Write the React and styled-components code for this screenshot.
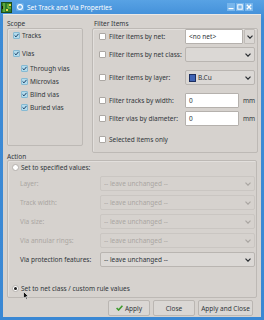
import React from "react";
import styled, { createGlobalStyle } from "styled-components";

const GlobalStyle = createGlobalStyle`
  html, body { margin: 0; padding: 0; }
  body {
    width: 264px;
    height: 320px;
    overflow: hidden;
    background: #3a8ad6;
    font-family: "Noto Sans", "DejaVu Sans", sans-serif;
    font-size: 6.5px;
    color: #31363b;
  }
`;

const Window = styled.div`
  position: relative;
  width: 264px;
  height: 320px;
  display: flex;
  flex-direction: column;
  background: linear-gradient(#58a2e4, #3d8bd6 20px, #3a88d4);
`;

const TitleBar = styled.div`
  height: 14px;
  flex: none;
  display: flex;
  align-items: center;
  padding: 0 11px 0 1px;
`;

const AppIcon = styled.svg`
  width: 11px;
  height: 11px;
  flex: none;
`;

const ViaIcon = styled.svg`
  width: 8px;
  height: 8px;
  margin-left: 4px;
  flex: none;
`;

const Title = styled.div`
  margin-left: 3px;
  color: #ffffff;
  font-size: 6.5px;
  flex: 1;
  white-space: nowrap;
`;

const WinButtons = styled.div`
  display: flex;
  gap: 1px;
`;

const WinButton = styled.div`
  width: 8px;
  height: 8px;
  background: #78b6ec;
  display: flex;
  align-items: center;
  justify-content: center;
`;

const Client = styled.div`
  flex: 1;
  margin: 0 3px 3px 3px;
  background: #d6d2ce;
  display: flex;
  flex-direction: column;
  padding: 6px 4px 1px 4px;
  box-shadow: inset 0 1px 0 #ebe8e5;
`;

const TopRow = styled.div`
  display: flex;
  gap: 9px;
  align-items: flex-start;
`;

const Column = styled.div`
  display: flex;
  flex-direction: column;
  width: ${(p) => (p.$width ? `${p.$width}px` : "auto")};
  flex: ${(p) => (p.$width ? "none" : "1")};
`;

const GroupLabel = styled.div`
  height: ${(p) => p.$h || 8}px;
  line-height: ${(p) => p.$h || 8}px;
  padding-left: ${(p) => p.$pl || 0}px;
  white-space: nowrap;
`;

const GroupBox = styled.div`
  box-sizing: border-box;
  height: ${(p) => p.$h}px;
  border: 1px solid #bdb9b5;
  border-radius: 2px;
  box-shadow: inset 1px 1px 0 #e2dfdc;
  padding: ${(p) => p.$pad};
  display: flex;
  flex-direction: column;
`;

const CheckRow = styled.div`
  height: 9px;
  display: flex;
  align-items: center;
  gap: 2px;
  margin-top: ${(p) => p.$mt || 0}px;
  padding-left: ${(p) => p.$indent || 0}px;
  white-space: nowrap;
`;

const Box = styled.span`
  width: 7px;
  height: 7px;
  flex: none;
  box-sizing: border-box;
  border: 1px solid ${(p) => (p.$checked ? "#86bad3" : "#aca8a4")};
  background: ${(p) => (p.$checked ? "#b3dbec" : "#ffffff")};
  border-radius: 1px;
  display: flex;
  align-items: center;
  justify-content: center;
`;

const Radio = styled.span`
  width: 7px;
  height: 7px;
  flex: none;
  box-sizing: border-box;
  border-radius: 50%;
  border: 1px solid #b3afab;
  background: #ffffff;
  display: flex;
  align-items: center;
  justify-content: center;
  &::after {
    content: "";
    width: 3px;
    height: 3px;
    border-radius: 50%;
    background: ${(p) => (p.$checked ? "#1e1e1e" : "transparent")};
  }
`;

const FilterRow = styled.div`
  height: 15px;
  display: grid;
  grid-template-columns: 86px 1fr;
  align-items: center;
  margin-top: ${(p) => p.$mt || 0}px;
`;

const FilterLabel = styled.div`
  display: flex;
  align-items: center;
  gap: 3px;
  white-space: nowrap;
`;

const Combo = styled.div`
  height: 15px;
  box-sizing: border-box;
  border: 1px solid ${(p) => (p.$disabled ? "#cac6c2" : "#b9b5b1")};
  border-radius: 2px;
  background: ${(p) => (p.$disabled ? "#d6d2ce" : "#dbd8d5")};
  color: ${(p) => (p.$disabled ? "#aaa6a2" : "#31363b")};
  display: flex;
  align-items: center;
  padding: 0 3px 0 3px;
  gap: 2px;
  white-space: nowrap;
`;

const ComboText = styled.span`
  flex: 1;
  overflow: hidden;
`;

const Chevron = styled.svg`
  width: 6px;
  height: 4px;
  flex: none;
`;

const EntryCombo = styled.div`
  display: flex;
  height: 15px;
  gap: 1px;
`;

const Entry = styled.div`
  box-sizing: border-box;
  width: ${(p) => p.$w}px;
  height: 15px;
  background: #ffffff;
  border: 1px solid #b5b1ad;
  border-radius: 1px;
  display: flex;
  align-items: center;
  padding-left: 3px;
  white-space: nowrap;
`;

const DropButton = styled.div`
  flex: 1;
  max-width: 11px;
  box-sizing: border-box;
  border: 1px solid #c0bcb8;
  border-radius: 1px;
  background: #dbd8d5;
  display: flex;
  align-items: center;
  justify-content: center;
`;

const UnitRow = styled.div`
  display: flex;
  align-items: center;
  gap: 4px;
`;

const Swatch = styled.span`
  width: 5px;
  height: 6px;
  background: #3f63b4;
  border: 1px solid #1d2f60;
  flex: none;
`;

const ActionLabel = styled(GroupLabel)`
  margin-top: 0;
`;

const ActionGrid = styled.div`
  display: grid;
  grid-template-columns: 88px 1fr;
  row-gap: 4px;
  margin-top: 4px;
  align-items: center;
`;

const ActionLabelText = styled.div`
  padding-left: 8px;
  color: ${(p) => (p.$disabled ? "#aaa6a2" : "#31363b")};
  white-space: nowrap;
`;

const ButtonRow = styled.div`
  display: flex;
  justify-content: flex-end;
  gap: 3px;
  margin-top: 2px;
  padding-right: 4px;
`;

const Button = styled.div`
  box-sizing: border-box;
  width: ${(p) => p.$w}px;
  height: 16px;
  border: 1px solid #bab6b2;
  border-radius: 2px;
  background: #dad7d4;
  display: flex;
  align-items: center;
  justify-content: center;
  gap: 2px;
  white-space: nowrap;
`;

const Cursor = styled.svg`
  position: absolute;
  left: 23px;
  top: 291px;
  width: 6px;
  height: 9px;
`;

const CheckMark = () => (
  <svg width="7" height="7" viewBox="0 0 7 7">
    <path d="M0.8 3.4 L2.8 5.4 L6.3 1.2" fill="none" stroke="#1b3c62" strokeWidth="1.4" />
  </svg>
);

const Check = ({ checked }) => <Box $checked={checked}>{checked && <CheckMark />}</Box>;

const ChevronIcon = ({ color }) => (
  <Chevron viewBox="0 0 6 4">
    <path d="M0.5 0.6 L3 3.2 L5.5 0.6" fill="none" stroke={color} strokeWidth="1.2" />
  </Chevron>
);

const scopeItems = [
  { label: "Tracks", mt: 0, indent: 0 },
  { label: "Vias", mt: 9, indent: 0 },
  { label: "Through vias", mt: 6, indent: 8 },
  { label: "Microvias", mt: 4, indent: 8 },
  { label: "Blind vias", mt: 4, indent: 8 },
  { label: "Buried vias", mt: 4, indent: 8 },
];

const actionRows = [
  { label: "Layer:", disabled: true },
  { label: "Track width:", disabled: true },
  { label: "Via size:", disabled: true },
  { label: "Via annular rings:", disabled: true },
  { label: "Via protection features:", disabled: false },
];

export default function App() {
  return (
    <>
      <GlobalStyle />
      <Window>
        <TitleBar>
          <AppIcon viewBox="0 0 11 11">
            <rect x="0" y="0" width="11" height="11" fill="#2f7d2a" />
            <rect x="0.5" y="0.5" width="10" height="10" fill="none" stroke="#1c4e18" />
            <path d="M3 1 V10 M7 2 V6 H10" stroke="#8fcf4f" strokeWidth="1" fill="none" />
            <rect x="5" y="7" width="2" height="2" fill="#e8d84a" />
            <rect x="8" y="2" width="2" height="2" fill="#e8d84a" />
            <rect x="1" y="4" width="1" height="3" fill="#151515" />
          </AppIcon>
          <ViaIcon viewBox="0 0 8 8">
            <rect x="0" y="0" width="8" height="8" rx="1.5" fill="#6aaee9" />
            <circle cx="4" cy="4" r="2.4" fill="none" stroke="#ffffff" strokeWidth="1.1" />
          </ViaIcon>
          <Title>Set Track and Via Properties</Title>
          <WinButtons>
            <WinButton>
              <svg width="6" height="6" viewBox="0 0 6 6">
                <rect x="0.5" y="4" width="5" height="1.2" fill="#ffffff" />
              </svg>
            </WinButton>
            <WinButton>
              <svg width="6" height="6" viewBox="0 0 6 6">
                <rect x="0.8" y="0.8" width="4.4" height="4.4" fill="none" stroke="#ffffff" strokeWidth="1" />
              </svg>
            </WinButton>
            <WinButton>
              <svg width="6" height="6" viewBox="0 0 6 6">
                <path d="M0.8 0.8 L5.2 5.2 M5.2 0.8 L0.8 5.2" stroke="#ffffff" strokeWidth="1.3" />
              </svg>
            </WinButton>
          </WinButtons>
        </TitleBar>

        <Client>
          <TopRow>
            <Column $width={76}>
              <GroupLabel>Scope</GroupLabel>
              <GroupBox $h={118} $pad="2px 0 0 5px">
                {scopeItems.map((it) => (
                  <CheckRow key={it.label} $mt={it.mt} $indent={it.indent}>
                    <Check checked />
                    <span>{it.label}</span>
                  </CheckRow>
                ))}
              </GroupBox>
            </Column>

            <Column>
              <GroupLabel $pl={2}>Filter Items</GroupLabel>
              <GroupBox $h={125} $pad="0 2px 0 6px">
                <FilterRow>
                  <FilterLabel>
                    <Check />
                    <span>Filter items by net:</span>
                  </FilterLabel>
                  <EntryCombo>
                    <Entry $w={58}>&lt;no net&gt;</Entry>
                    <DropButton>
                      <ChevronIcon color="#2b2f33" />
                    </DropButton>
                  </EntryCombo>
                </FilterRow>
                <FilterRow $mt={3}>
                  <FilterLabel>
                    <Check />
                    <span>Filter items by net class:</span>
                  </FilterLabel>
                  <Combo>
                    <ComboText />
                    <ChevronIcon color="#2b2f33" />
                  </Combo>
                </FilterRow>
                <FilterRow $mt={8}>
                  <FilterLabel>
                    <Check />
                    <span>Filter items by layer:</span>
                  </FilterLabel>
                  <Combo>
                    <Swatch />
                    <ComboText>B.Cu</ComboText>
                    <ChevronIcon color="#2b2f33" />
                  </Combo>
                </FilterRow>
                <FilterRow $mt={8}>
                  <FilterLabel>
                    <Check />
                    <span>Filter tracks by width:</span>
                  </FilterLabel>
                  <UnitRow>
                    <Entry $w={54}>0</Entry>
                    <span>mm</span>
                  </UnitRow>
                </FilterRow>
                <FilterRow $mt={3}>
                  <FilterLabel>
                    <Check />
                    <span>Filter vias by diameter:</span>
                  </FilterLabel>
                  <UnitRow>
                    <Entry $w={54}>0</Entry>
                    <span>mm</span>
                  </UnitRow>
                </FilterRow>
                <FilterRow $mt={6}>
                  <FilterLabel>
                    <Check />
                    <span>Selected items only</span>
                  </FilterLabel>
                </FilterRow>
              </GroupBox>
            </Column>
          </TopRow>

          <ActionLabel $h={7}>Action</ActionLabel>
          <GroupBox $h={138} $pad="2px 1px 0 4px">
            <CheckRow>
              <Radio />
              <span>Set to specified values:</span>
            </CheckRow>
            <ActionGrid>
              {actionRows.map((r) => (
                <React.Fragment key={r.label}>
                  <ActionLabelText $disabled={r.disabled}>{r.label}</ActionLabelText>
                  <Combo $disabled={r.disabled}>
                    <ComboText>-- leave unchanged --</ComboText>
                    <ChevronIcon color={r.disabled ? "#aaa6a2" : "#2b2f33"} />
                  </Combo>
                </React.Fragment>
              ))}
            </ActionGrid>
            <CheckRow $mt={17}>
              <Radio $checked />
              <span>Set to net class / custom rule values</span>
            </CheckRow>
          </GroupBox>

          <ButtonRow>
            <Button $w={42}>
              <svg width="7" height="6" viewBox="0 0 7 6">
                <path d="M0.6 3 L2.6 5 L6.4 0.8" fill="none" stroke="#3e9a2c" strokeWidth="1.6" />
              </svg>
              <span>Apply</span>
            </Button>
            <Button $w={42}>Close</Button>
            <Button $w={55}>Apply and Close</Button>
          </ButtonRow>
        </Client>

        <Cursor viewBox="0 0 6 9">
          <path d="M0.5 0.5 L0.5 7.5 L2.2 5.9 L3.4 8.5 L4.4 8 L3.3 5.5 L5.5 5.5 Z" fill="#111111" stroke="#ffffff" strokeWidth="0.6" />
        </Cursor>
      </Window>
    </>
  );
}
